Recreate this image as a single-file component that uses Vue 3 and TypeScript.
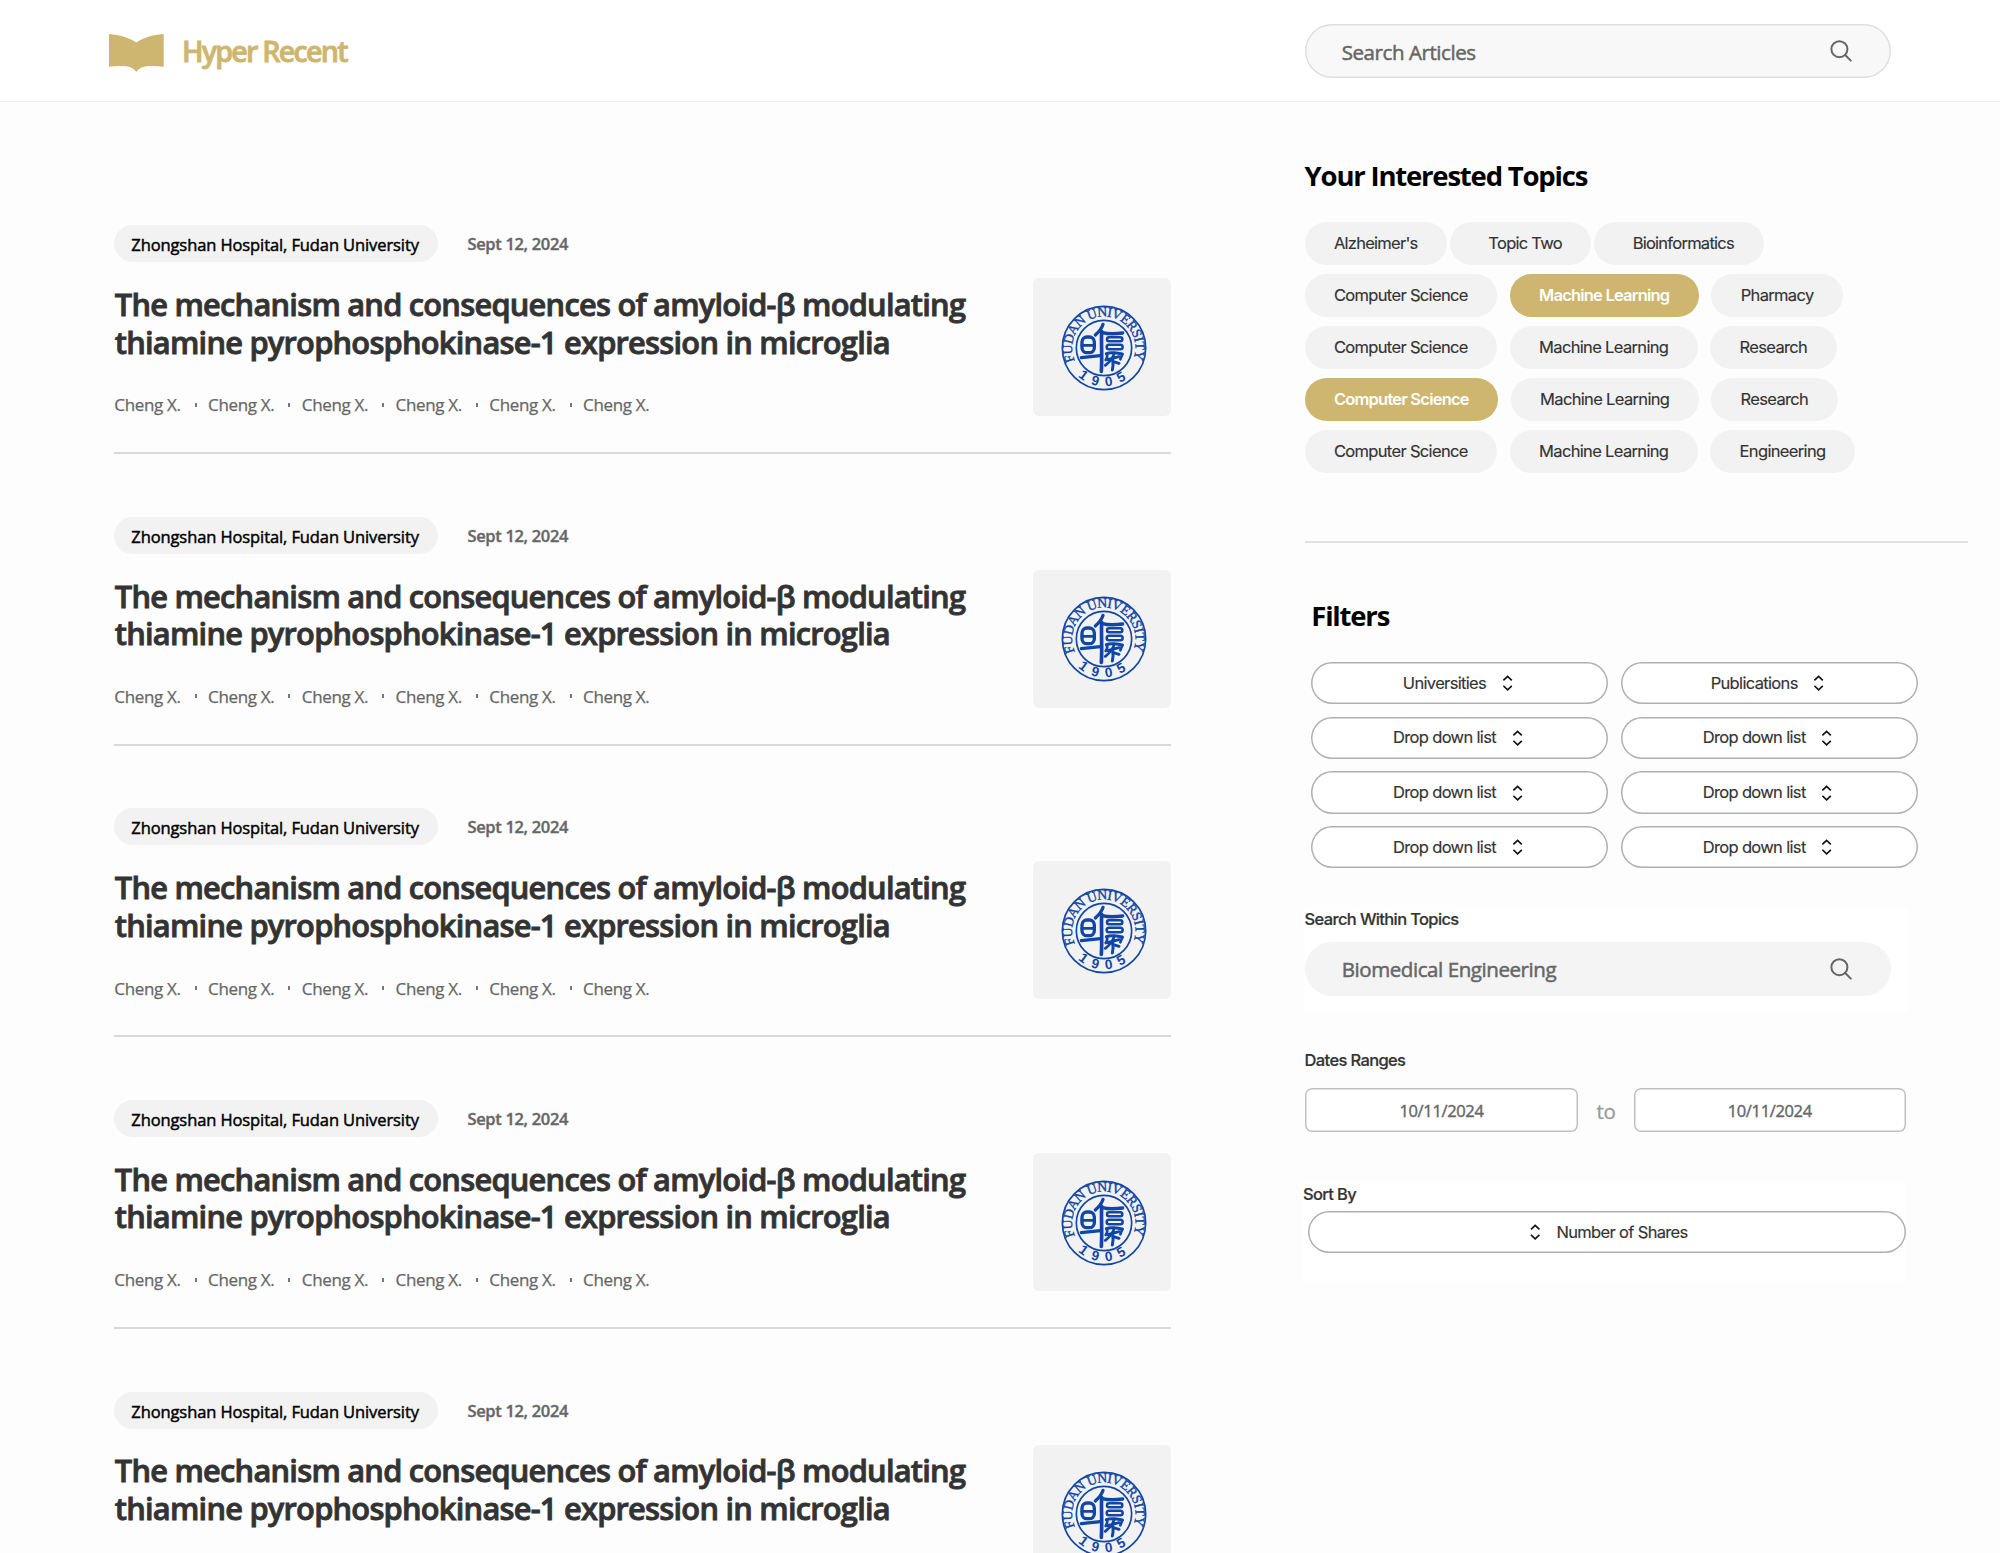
<script setup lang="ts">
interface Chip {
  label: string
  active?: boolean
}

const articles = Array.from({ length: 5 }, (_, id) => ({
  id,
  source: 'Zhongshan Hospital, Fudan University',
  date: 'Sept 12, 2024',
  title: 'The mechanism and consequences of amyloid-β modulating thiamine pyrophosphokinase-1 expression in microglia',
  authors: Array.from({ length: 6 }, () => 'Cheng X.'),
}))

const topicRows: Chip[][] = [
  [{ label: "Alzheimer's" }, { label: 'Topic Two' }, { label: 'Bioinformatics' }],
  [{ label: 'Computer Science' }, { label: 'Machine Learning', active: true }, { label: 'Pharmacy' }],
  [{ label: 'Computer Science' }, { label: 'Machine Learning' }, { label: 'Research' }],
  [{ label: 'Computer Science', active: true }, { label: 'Machine Learning' }, { label: 'Research' }],
  [{ label: 'Computer Science' }, { label: 'Machine Learning' }, { label: 'Engineering' }],
]

const filters: string[] = ['Universities', 'Publications', ...Array.from({ length: 6 }, () => 'Drop down list')]
</script>

<template>
  <div class="page">
    <header class="topbar">
      <div class="brand">
        <svg class="book" viewBox="0 0 55 38" width="55" height="38">
          <path d="M0 0C11 1 20 3.5 27.3 8.5C34.5 3.5 43 1 54.7 0V32.7C46 31.6 38 31.6 33 33.3C30.4 34.3 28.8 36 27.3 38C25.8 36 24.2 34.3 21.6 33.3C16.6 31.6 8.6 31.6 0 32.7Z" fill="#ceb670" />
        </svg>
        <span class="brand-name">Hyper Recent</span>
      </div>
      <div class="search search-top">
        <span>Search Articles</span>
        <svg class="lens" viewBox="0 0 22 22" width="22" height="22">
          <circle cx="9.4" cy="9.2" r="8" />
          <path d="M15.2 15L20.8 20.6" />
        </svg>
      </div>
    </header>

    <div class="columns">
      <main class="feed">
        <article v-for="a in articles" :key="a.id" class="article">
          <div class="meta">
            <span class="source">{{ a.source }}</span>
            <span class="date">{{ a.date }}</span>
          </div>
          <div class="body">
            <div class="text">
              <h2>{{ a.title }}</h2>
              <ul class="authors">
                <li v-for="(name, i) in a.authors" :key="i">
                  {{ name }}<i v-if="i < a.authors.length - 1" class="dot"></i>
                </li>
              </ul>
            </div>
            <div class="thumb">
              <svg viewBox="62 59 258 258" width="86" height="86">
                <defs>
                  <path :id="'arc-top-' + a.id" d="M103.5 226.5A95 95 0 1 1 277.5 226.5" />
                  <path :id="'arc-bot-' + a.id" d="M105 265A116 116 0 0 0 277 265" />
                </defs>
                <g fill="none" stroke="#1146a4">
                  <circle cx="191" cy="188" r="125" stroke-width="5" />
                  <circle cx="191" cy="188" r="83" stroke-width="5" />
                  <g stroke-width="10" stroke-linecap="round" stroke-linejoin="round">
                    <rect x="125" y="155" width="37" height="47" rx="15" />
                    <path d="M125 180H161" stroke-width="8.5" />
                    <path d="M123 217L180 211" />
                    <path d="M188 117C185 128 176 139 165 149" />
                    <path d="M184 138C182 175 186 210 183 258" stroke-width="11" />
                    <path d="M186 142C205 147 225 146 247 143" />
                    <rect x="200" y="156" width="46" height="12" rx="6" stroke-width="7.5" />
                    <rect x="199" y="178" width="48" height="14" rx="7" stroke-width="7.5" />
                    <path d="M198 205C212 200 230 203 246 206" stroke-width="9" />
                    <path d="M200 206C202 212 200 218 196 224M246 207L240 222" stroke-width="8" />
                    <path d="M222 203C218 218 208 230 195 240M201 223L236 214" stroke-width="8.5" />
                    <path d="M217 222C219 234 219 242 216 254M217 228L236 234" stroke-width="9" />
                  </g>
                </g>
                <text class="ring-text"><textPath :href="'#arc-top-' + a.id" textLength="372" lengthAdjust="spacing">FUDAN UNIVERSITY</textPath></text>
                <text class="ring-year"><textPath :href="'#arc-bot-' + a.id" startOffset="11" textLength="158" lengthAdjust="spacing">1905</textPath></text>
              </svg>
            </div>
          </div>
        </article>
      </main>

      <aside class="side">
        <section class="topics">
          <h3>Your Interested Topics</h3>
          <div v-for="(row, r) in topicRows" :key="r" class="chip-row" :class="{ tight: r === 0 }">
            <span v-for="(c, i) in row" :key="i" class="chip" :class="{ active: c.active }">{{ c.label }}</span>
          </div>
        </section>

        <section class="filters">
          <h3>Filters</h3>
          <div class="filter-grid">
            <button v-for="(f, i) in filters" :key="i" class="select">
              <span>{{ f }}</span>
              <svg class="updown" viewBox="0 0 14 16" width="14" height="16">
                <path d="M0.4 5.3L4.6 1.3L8.8 5.3M0.4 10.9L4.6 14.9L8.8 10.9" />
              </svg>
            </button>
          </div>
        </section>

        <section class="within">
          <label>Search Within Topics</label>
          <div class="search search-within">
            <span>Biomedical Engineering</span>
            <svg class="lens" viewBox="0 0 22 22" width="22" height="22">
              <circle cx="9.4" cy="9.2" r="8" />
              <path d="M15.2 15L20.8 20.6" />
            </svg>
          </div>
        </section>

        <section class="dates">
          <label>Dates Ranges</label>
          <div class="date-row">
            <span class="date-box">10/11/2024</span>
            <span class="to">to</span>
            <span class="date-box">10/11/2024</span>
          </div>
        </section>

        <section class="sort">
          <label>Sort By</label>
          <button class="select sort-select">
            <svg class="updown" viewBox="-4.6 0 14 16" width="14" height="16">
              <path d="M0.4 5.3L4.6 1.3L8.8 5.3M0.4 10.9L4.6 14.9L8.8 10.9" />
            </svg>
            <span>Number of Shares</span>
          </button>
        </section>
      </aside>
    </div>
  </div>
</template>

<style>
body {
  margin: 0;
  overflow: hidden;
  background: #fdfdfd;
}
</style>

<style scoped>
.page {
  width: 2000px;
  height: 1553px;
  overflow: hidden;
  background: #fdfdfd;
  font-family: "Open Sans", "Noto Sans", sans-serif;
  color: #333;
}
.page * {
  box-sizing: border-box;
}
.topbar {
  display: flex;
  justify-content: space-between;
  height: 102px;
  padding: 24px 109.5px 0 109px;
  background: #fff;
  border-bottom: 1.5px solid #ececec;
}
.brand {
  display: flex;
  padding-top: 10px;
}
.brand-name {
  margin-left: 18px;
  margin-top: -5.5px;
  font-size: 28.7px;
  line-height: 44px;
  font-weight: 600;
  letter-spacing: -1.8px;
  color: #ceb670;
  -webkit-text-stroke: 0.8px #ceb670;
}
.search {
  display: flex;
  align-items: center;
  justify-content: space-between;
  width: 586px;
  height: 54px;
  padding: 0 39px 0 37.2px;
  border-radius: 27px;
  font-size: 20.5px;
  letter-spacing: -0.43px;
  color: #666;
  -webkit-text-stroke: 0.5px #666;
}
.search span {
  padding-top: 1px;
  line-height: 28px;
}
.search-top {
  background: #f8f8f8;
  box-shadow: inset 0 0 0 1.4px #dedede;
}
.lens {
  fill: none;
  stroke: #666;
  stroke-width: 2;
  stroke-linecap: round;
}
.columns {
  display: flex;
  align-items: flex-start;
}
.feed {
  width: 1057px;
  margin-left: 114.3px;
  padding-top: 123.2px;
}
.article {
  height: 228.7px;
  margin-bottom: 62.95px;
  border-bottom: 2px solid #d9d9d9;
}
.meta {
  display: flex;
  align-items: center;
  height: 37px;
}
.source {
  width: 323.6px;
  height: 37px;
  border-radius: 18.5px;
  background: #f2f2f2;
  padding-left: 17px;
  font-size: 16.5px;
  line-height: 39px;
  letter-spacing: -0.1px;
  color: #000;
  -webkit-text-stroke: 0.45px #000;
  white-space: nowrap;
}
.date {
  margin-left: 29.5px;
  padding-top: 1.4px;
  font-size: 16.5px;
  line-height: 38.6px;
  font-weight: 600;
  letter-spacing: -0.33px;
  color: #666;
  -webkit-text-stroke: 0.35px #666;
}
.body {
  display: flex;
  justify-content: space-between;
  margin-top: 16px;
}
h2 {
  width: 880px;
  margin: 7.8px 0 0 0.5px;
  font-size: 30.8px;
  line-height: 37.6px;
  font-weight: 600;
  letter-spacing: -0.76px;
  color: #333;
  -webkit-text-stroke: 0.85px #333;
}
.authors {
  display: flex;
  margin: 32.2px 0 0;
  padding: 0;
  list-style: none;
  font-size: 17px;
  line-height: 24px;
  letter-spacing: -0.35px;
  color: #666;
  -webkit-text-stroke: 0.25px #666;
}
.authors li {
  display: flex;
  width: 93.75px;
  white-space: nowrap;
}
.dot {
  width: 2px;
  height: 4px;
  margin: 9.5px 0 0 14.2px;
  background: #777;
}
.thumb {
  display: flex;
  width: 138px;
  height: 138px;
  padding: 26.5px 0 0 27.8px;
  border-radius: 6px;
  background: #f2f2f2;
}
.ring-text {
  font: 41px "Liberation Serif", serif;
  fill: #1146a4;
  stroke: #1146a4;
  stroke-width: 1.2;
}
.ring-year {
  font: bold 41px "Liberation Sans", sans-serif;
  fill: #1146a4;
}
.side {
  width: 663.3px;
  margin-left: 133.3px;
  padding-top: 54px;
}
h3 {
  margin: 0;
  font-size: 27.5px;
  line-height: 40px;
  font-weight: 700;
  letter-spacing: -1.2px;
  color: #000;
}
.topics {
  height: 386.5px;
  border-bottom: 2px solid #e2e2e2;
}
.topics h3 {
  margin-bottom: 26px;
}
.chip-row {
  display: flex;
  gap: 12.5px;
  margin-bottom: 9.4px;
}
.chip {
  height: 42.7px;
  padding: 0 29.5px 0 29.3px;
  border-radius: 21.4px;
  background: #f2f2f2;
  font: 400 16.5px/42.7px Inter, sans-serif;
  letter-spacing: -0.66px;
  white-space: nowrap;
  color: #333;
  -webkit-text-stroke: 0.15px #333;
}
.chip.active {
  background: #ceb670;
  color: #fff;
  font-weight: 600;
  letter-spacing: -0.79px;
  -webkit-text-stroke: 0;
}
.tight {
  gap: 2.5px;
}
.tight .chip {
  letter-spacing: -0.74px;
}
.tight .chip + .chip {
  padding-left: 38.8px;
}
.tight .chip:last-child {
  padding-right: 30.5px;
}
.filters {
  padding: 53px 0 0 6.7px;
}
.filter-grid {
  display: grid;
  grid-template-columns: 297px 297px;
  gap: 12.3px 12.7px;
  margin-top: 26.7px;
}
.select {
  display: flex;
  align-items: center;
  justify-content: center;
  gap: 16.6px;
  height: 42.3px;
  padding: 0;
  border: 0;
  border-radius: 21.2px;
  background: #fff;
  box-shadow: inset 0 0 0 1.5px #b0b0b0;
  font: 400 16.5px/22px Inter, sans-serif;
  letter-spacing: -0.66px;
  color: #333;
}
.select span {
  margin-top: -1px;
  -webkit-text-stroke: 0.15px #333;
}
.updown {
  fill: none;
  stroke: #111;
  stroke-width: 1.6;
}
label {
  display: block;
  font: 500 16.5px/22px Inter, sans-serif;
  letter-spacing: -0.64px;
  color: #333;
  -webkit-text-stroke: 0.2px #333;
}
.within {
  width: 603px;
  height: 103px;
  margin-top: 39.5px;
  background: #fff;
}
.search-within {
  margin-top: 12.3px;
  background: #f4f4f4;
}
.search-within span {
  padding-top: 0;
}
.dates {
  margin-top: 38.6px;
}
.date-row {
  display: flex;
  align-items: center;
  width: 601.3px;
  margin-top: 17px;
}
.date-box {
  width: 273.8px;
  height: 44px;
  border-radius: 7px;
  background: #fff;
  box-shadow: inset 0 0 0 1.5px #c0c0c0;
  text-align: center;
  font-size: 16.5px;
  line-height: 45.4px;
  letter-spacing: -0.35px;
  color: #666;
  -webkit-text-stroke: 0.4px #666;
}
.date-box:last-child {
  width: 272.3px;
}
.to {
  flex: 1;
  text-align: center;
  font-size: 20.5px;
  line-height: 28px;
  padding-top: 2px;
  letter-spacing: -0.4px;
  color: #999;
  -webkit-text-stroke: 0.3px #999;
}
.sort {
  width: 604px;
  height: 98px;
  margin: 50.6px 0 0 -2.6px;
  padding: 0 0 0 1px;
  background: #fff;
}
.sort-select {
  width: 597.5px;
  margin: 6px 0 0 5px;
}
</style>
